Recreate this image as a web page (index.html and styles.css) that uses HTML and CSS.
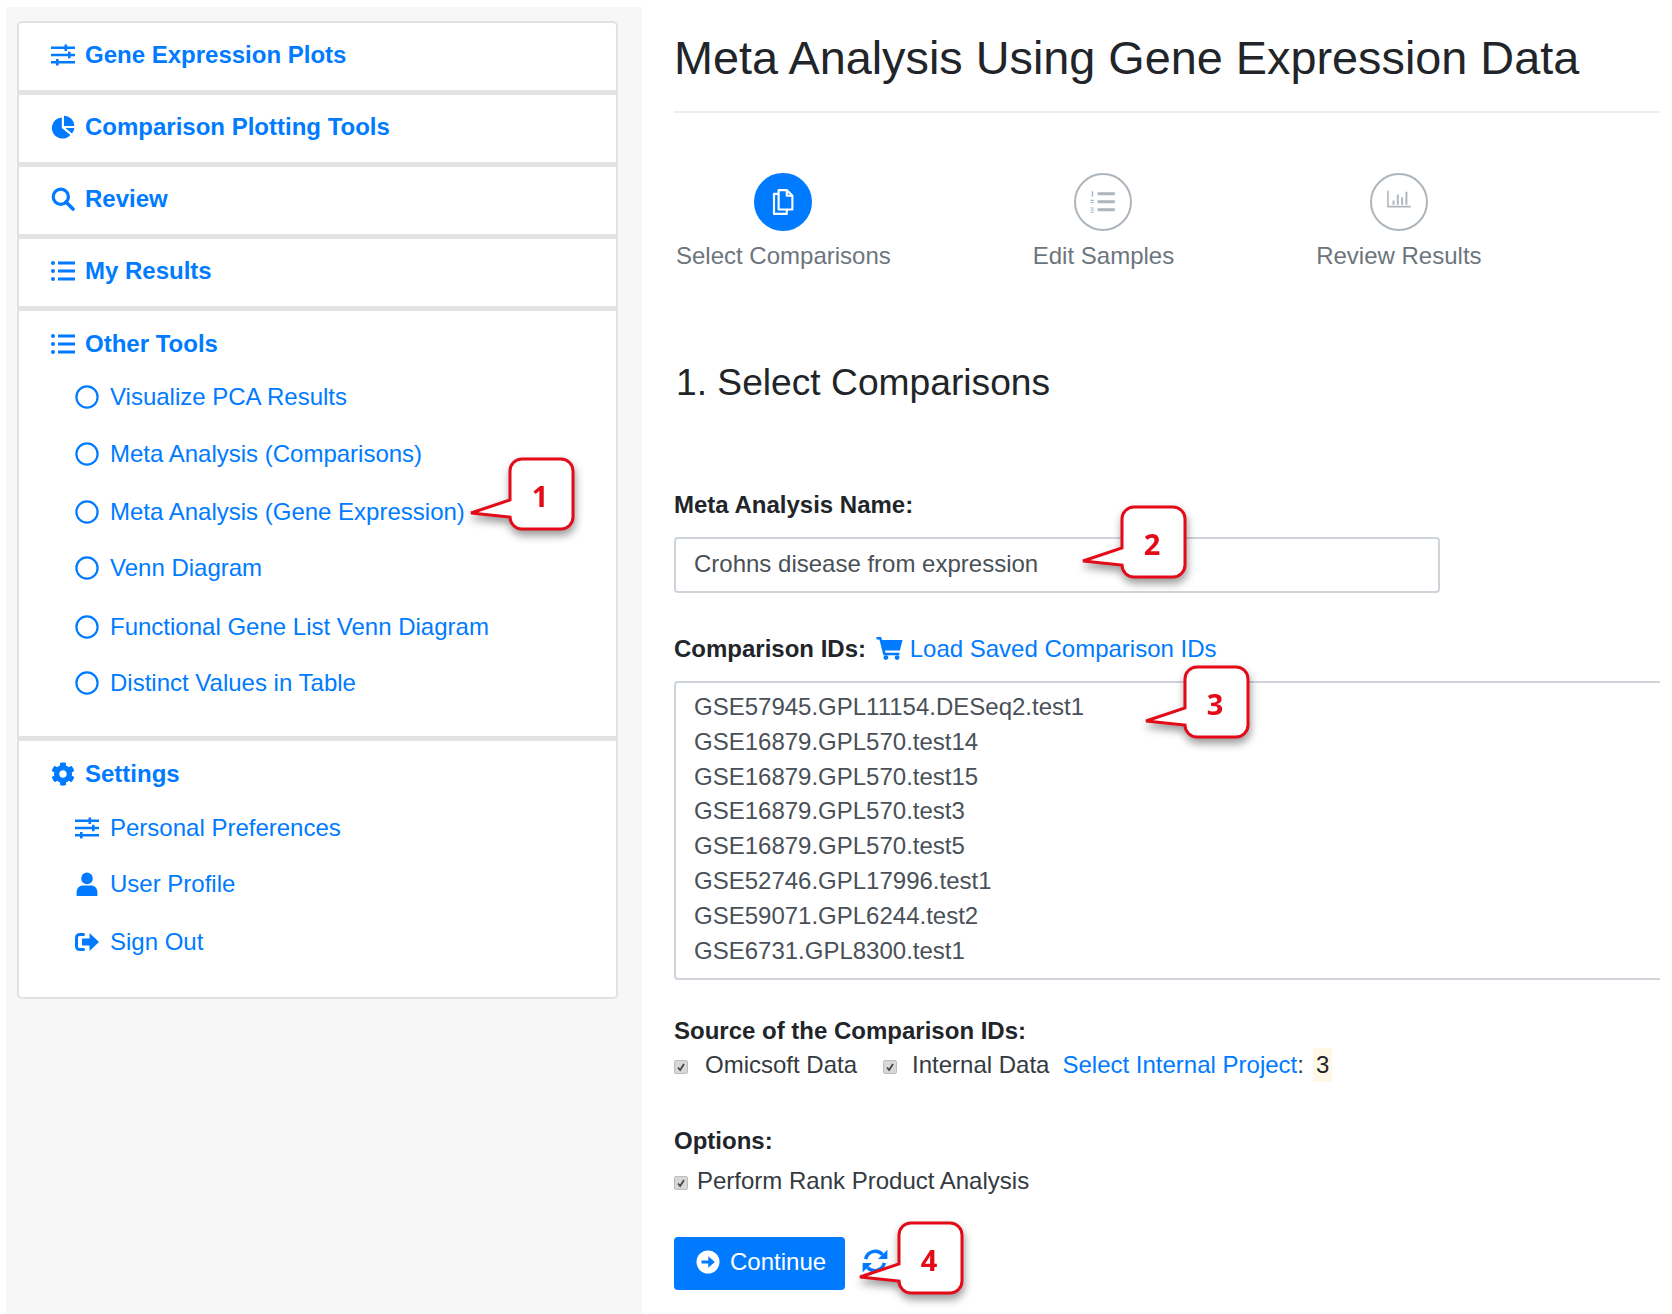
FILE: index.html
```html
<!DOCTYPE html>
<html>
<head>
    <title>Meta Analysis Using Gene Expression Data</title>
    <link rel="stylesheet" href="styles.css">
</head>
<body>
    <!-- shared icons -->
    <svg class="defs" width="0" height="0">
        <symbol id="i-sliders" viewBox="0 0 24 24">
            <path d="M0 3.5h24v2.6H0zM0 10.7h24v2.6H0zM0 17.9h24v2.6H0z"/>
            <path d="M13.5 1.5h2.6v6.6h-2.6zM17 8.7h2.6v6.6H17zM5 15.9h2.6v6.6H5z"/>
        </symbol>
        <symbol id="i-pie" viewBox="0 0 24 24">
            <path d="M10.8 2.4A10.6 10.6 0 1 0 19.4 20L10.8 13Z"/>
            <path d="M13 .8A10.4 10.4 0 0 1 23.4 11H13Z"/>
            <path d="M14.4 13h9A10.6 10.6 0 0 1 20.9 18.6Z"/>
        </symbol>
        <symbol id="i-search" viewBox="0 0 24 24">
            <circle cx="9.8" cy="9.8" r="7.6" fill="none" stroke="currentColor" stroke-width="3.2"/>
            <path d="M15 15l7 7" fill="none" stroke="currentColor" stroke-width="3.6" stroke-linecap="round"/>
        </symbol>
        <symbol id="i-list" viewBox="0 0 24 24">
            <circle cx="2" cy="4" r="2"/><circle cx="2" cy="12" r="2"/><circle cx="2" cy="20" r="2"/>
            <path d="M7 2.6h17v2.8H7zM7 10.6h17v2.8H7zM7 18.6h17v2.8H7z"/>
        </symbol>
        <symbol id="i-cog" viewBox="0 0 512 512">
            <path d="M487.4 315.7l-42.6-24.6c4.3-23.2 4.3-47 0-70.2l42.6-24.6c4.9-2.8 7.1-8.6 5.5-14-11.1-35.6-30-67.8-54.7-94.6-3.8-4.1-10-5.1-14.8-2.3L380.8 110c-17.9-15.4-38.5-27.3-60.8-35.1V25.8c0-5.6-3.9-10.5-9.4-11.7-36.7-8.2-74.3-7.8-109.2 0-5.5 1.2-9.4 6.1-9.4 11.7V75c-22.2 7.9-42.8 19.8-60.8 35.1L88.7 85.5c-4.9-2.8-11-1.9-14.8 2.3-24.7 26.7-43.6 58.9-54.7 94.6-1.7 5.4.6 11.2 5.5 14L67.3 221c-4.3 23.2-4.3 47 0 70.2l-42.6 24.6c-4.9 2.8-7.1 8.6-5.5 14 11.1 35.6 30 67.8 54.7 94.6 3.8 4.1 10 5.1 14.8 2.3l42.6-24.6c17.9 15.4 38.5 27.3 60.8 35.1v49.2c0 5.6 3.9 10.5 9.4 11.7 36.7 8.2 74.3 7.8 109.2 0 5.5-1.2 9.4-6.1 9.4-11.7v-49.2c22.2-7.9 42.8-19.8 60.8-35.1l42.6 24.6c4.9 2.8 11 1.9 14.8-2.3 24.7-26.7 43.6-58.9 54.7-94.6 1.5-5.5-.7-11.3-5.6-14.1zM256 336c-44.1 0-80-35.9-80-80s35.9-80 80-80 80 35.9 80 80-35.9 80-80 80z"/>
        </symbol>
        <symbol id="i-circle" viewBox="0 0 24 24">
            <circle cx="12" cy="12" r="10.6" fill="none" stroke="currentColor" stroke-width="2.2"/>
        </symbol>
        <symbol id="i-user" viewBox="0 0 24 24">
            <circle cx="12" cy="6.4" r="5.8"/>
            <path d="M1.6 23.4v-3.2c0-4 3-6.6 6.4-6.6h8c3.4 0 6.4 2.6 6.4 6.6v3.2c0 .4-.3.6-.6.6H2.2c-.3 0-.6-.2-.6-.6z"/>
        </symbol>
        <symbol id="i-signout" viewBox="0 0 24 24">
            <path d="M8.5 4.5H4.5a3 3 0 0 0-3 3v9a3 3 0 0 0 3 3h4" fill="none" stroke="currentColor" stroke-width="3" stroke-linecap="round"/>
            <path d="M7 8.6h7.5V3L24 12l-9.5 9v-5.6H7z"/>
        </symbol>
        <symbol id="i-cart" viewBox="0 0 26 24">
            <path d="M0 1h4.6l.9 3H26l-2.6 10.4H8.4l.5 2.4h14v2.4H6.9L2.9 3.4H0z"/>
            <circle cx="9.4" cy="21.6" r="2.4"/><circle cx="20.6" cy="21.6" r="2.4"/>
        </symbol>
        <symbol id="i-sync" viewBox="0 0 24 24">
            <path d="M3.4 10.2A9 9 0 0 1 19 6.2" fill="none" stroke="currentColor" stroke-width="3.2"/>
            <path d="M23.4 1.6v8.6h-8.6z"/>
            <path d="M20.6 13.8A9 9 0 0 1 5 17.8" fill="none" stroke="currentColor" stroke-width="3.2"/>
            <path d="M.6 22.4v-8.6h8.6z"/>
        </symbol>
        <symbol id="i-callout" viewBox="0 0 120 90">
            <path d="M45 18a12 12 0 0 1 12-12h39a12 12 0 0 1 12 12v46a12 12 0 0 1-12 12H57a12 12 0 0 1-12-12L6 60l39-13z"/>
        </symbol>
    </svg>

    <div class="page">
        <div class="sidebar">
            <div class="panel">
                <a class="row" href="#"><svg class="ico"><use href="#i-sliders"/></svg>Gene Expression Plots</a>
                <a class="row" href="#"><svg class="ico"><use href="#i-pie"/></svg>Comparison Plotting Tools</a>
                <a class="row" href="#"><svg class="ico"><use href="#i-search"/></svg>Review</a>
                <a class="row" href="#"><svg class="ico"><use href="#i-list"/></svg>My Results</a>

                <div class="group group-tools">
                    <a class="head" href="#"><svg class="ico"><use href="#i-list"/></svg>Other Tools</a>
                    <ul class="subnav">
                        <li><svg class="ico"><use href="#i-circle"/></svg>Visualize PCA Results</li>
                        <li><svg class="ico"><use href="#i-circle"/></svg>Meta Analysis (Comparisons)</li>
                        <li><svg class="ico"><use href="#i-circle"/></svg>Meta Analysis (Gene Expression)</li>
                        <li><svg class="ico"><use href="#i-circle"/></svg>Venn Diagram</li>
                        <li><svg class="ico"><use href="#i-circle"/></svg>Functional Gene List Venn Diagram</li>
                        <li><svg class="ico"><use href="#i-circle"/></svg>Distinct Values in Table</li>
                    </ul>
                </div>

                <div class="group group-settings">
                    <a class="head" href="#"><svg class="ico"><use href="#i-cog"/></svg>Settings</a>
                    <ul class="subnav">
                        <li><svg class="ico"><use href="#i-sliders"/></svg>Personal Preferences</li>
                        <li><svg class="ico"><use href="#i-user"/></svg>User Profile</li>
                        <li><svg class="ico"><use href="#i-signout"/></svg>Sign Out</li>
                    </ul>
                </div>
            </div>
        </div>

        <div class="main">
            <h1>Meta Analysis Using Gene Expression Data</h1>

            <div class="steps">
                <div class="step active">
                    <span class="dot">
                        <svg width="30" height="30" viewBox="0 0 24 24" fill="none" stroke="currentColor" stroke-width="1.7" stroke-linejoin="round">
                            <path d="M8.5 2.5h6.5l4.5 4.5v11H8.5z"/>
                            <path d="M15 2.5V7h4.5"/>
                            <path d="M8.5 5.5H4.8v16H15V18"/>
                        </svg>
                    </span>
                    Select Comparisons
                </div>
                <div class="step">
                    <span class="dot">
                        <svg width="28" height="28" viewBox="0 0 26 26" fill="currentColor">
                            <path d="M8 4h16v2.8H8zM8 11.4h16v2.8H8zM8 18.8h16v2.8H8z"/>
                            <path d="M2.5 3h1.4v5H2.5zM1.5 11h3v1h-3zM1.5 13h3v1h-3zM1.5 18h3v1h-3zM1.5 20h3v1h-3zM1.5 22h3v1h-3z"/>
                        </svg>
                    </span>
                    Edit Samples
                </div>
                <div class="step">
                    <span class="dot">
                        <svg width="28" height="28" viewBox="0 0 26 26" fill="currentColor">
                            <path d="M2 2.5h1.4v14H24V18H2z"/>
                            <path d="M7 11.5h1.8v4H7zM11 6h1.8v9.5H11zM15 8.5h1.8v7H15zM19 3.5h1.8v12H19z"/>
                        </svg>
                    </span>
                    Review Results
                </div>
            </div>

            <h2>1. Select Comparisons</h2>

            <form>
                <label class="field-label name-label" for="metaName">Meta Analysis Name:</label>
                <input class="box name-input" type="text" id="metaName" value="Crohns disease from expression">

                <div class="field-label ids-label">
                    Comparison IDs:
                    <a class="load-link" href="#"><svg class="cart"><use href="#i-cart"/></svg>Load Saved Comparison IDs</a>
                </div>
                <textarea class="box ids-input" rows="8">GSE57945.GPL11154.DESeq2.test1
GSE16879.GPL570.test14
GSE16879.GPL570.test15
GSE16879.GPL570.test3
GSE16879.GPL570.test5
GSE52746.GPL17996.test1
GSE59071.GPL6244.test2
GSE6731.GPL8300.test1</textarea>

                <div class="field-label source-label">Source of the Comparison IDs:</div>
                <div class="checks">
                    <span class="check"><svg viewBox="0 0 14 14"><path d="M3.5 7.5l2.5 3 4.5-7"/></svg></span>
                    <span class="opt-omic">Omicsoft Data</span>
                    <span class="check"><svg viewBox="0 0 14 14"><path d="M3.5 7.5l2.5 3 4.5-7"/></svg></span>
                    <span class="opt-internal">Internal Data</span>
                    <span><a href="#">Select Internal Project</a>:</span>
                    <span class="count">3</span>
                </div>

                <div class="field-label options-label">Options:</div>
                <div class="checks rank-row">
                    <span class="check"><svg viewBox="0 0 14 14"><path d="M3.5 7.5l2.5 3 4.5-7"/></svg></span>
                    <span class="opt-rank">Perform Rank Product Analysis</span>
                </div>

                <div class="actions">
                    <button class="btn" type="button">
                        <svg width="24" height="24" viewBox="0 0 24 24">
                            <circle cx="12" cy="12" r="11.5" fill="#fff"/>
                            <path d="M5.5 10.4h6.8V6.2L18.8 12l-6.5 5.8v-4.2H5.5z" fill="#007bff"/>
                        </svg>
                        Continue
                    </button>
                    <svg class="sync"><use href="#i-sync"/></svg>
                </div>
            </form>
        </div>

        <!-- red help callouts over the page -->
        <div class="callout c1"><svg><use href="#i-callout"/><text x="75" y="54">1</text></svg></div>
        <div class="callout c2"><svg><use href="#i-callout"/><text x="75" y="54">2</text></svg></div>
        <div class="callout c3"><svg><use href="#i-callout"/><text x="75" y="54">3</text></svg></div>
        <div class="callout c4"><svg><use href="#i-callout"/><text x="75" y="54">4</text></svg></div>
    </div>
</body>
</html>
```

FILE: styles.css
```css
html, body {
    margin: 0;
    padding: 0;
    background-color: #fff;
    overflow: hidden;
}
body {
    font-family: "Liberation Sans", Arial, sans-serif;
    font-size: 24px;
    color: #212529;
}
a {
    color: #007bff;
    text-decoration: none;
}
.defs {
    position: absolute;
}
.page {
    position: relative;
    display: flex;
    width: 1672px;
    height: 1314px;
    overflow: hidden;
}

/* sidebar */
.sidebar {
    box-sizing: border-box;
    width: 636px;
    height: 1307px;
    margin: 7px 0 0 6px;
    padding: 14px 0 0 11px;
    background-color: #f7f7f7;
}
.panel {
    box-sizing: border-box;
    width: 601px;
    height: 978px;
    background-color: #fff;
    border: 2px solid #e2e2e2;
    border-radius: 5px;
}
.row {
    display: flex;
    align-items: center;
    box-sizing: border-box;
    height: 72px;
    padding: 0 0 4px 32px;
    border-bottom: 5px solid #e2e2e2;
    font-weight: bold;
}
.ico {
    flex: none;
    width: 24px;
    height: 24px;
    margin-right: 10px;
    fill: currentColor;
    color: #007bff;
}
.group {
    padding-left: 32px;
}
.group-tools {
    height: 425px;
    box-sizing: border-box;
    padding-top: 19px;
}
.group-settings {
    height: 256px;
    box-sizing: border-box;
    padding-top: 19px;
    border-top: 5px solid #e2e2e2;
}
.head {
    display: flex;
    align-items: center;
    height: 28px;
    font-weight: bold;
}
.subnav {
    list-style: none;
    margin: 10px 0 0 0;
    padding: 0 0 0 24px;
    color: #007bff;
}
.group-settings .subnav {
    margin-top: 11px;
}
.subnav li {
    display: flex;
    align-items: center;
    height: 57px;
}
.subnav li .ico {
    width: 24px;
    height: 24px;
    margin-right: 11px;
}
.group-tools li:nth-child(3) { margin-top: 1px; }
.group-tools li:nth-child(4) { margin-top: -1px; }
.group-tools li:nth-child(5) { margin-top: 2px; }
.group-tools li:nth-child(6) { margin-top: -1px; }
.group-settings li:nth-child(2) { margin-top: -1px; }
.group-settings li:nth-child(3) { margin-top: 1px; }

/* main column */
.main {
    width: 986px;
    margin-left: 32px;
    overflow: hidden;
}
h1 {
    height: 60px;
    margin: 28px 0 0 0;
    padding-bottom: 23px;
    border-bottom: 2px solid #eee;
    font-size: 46.8px;
    font-weight: normal;
    line-height: 60px;
}
.steps {
    display: flex;
    gap: 142px;
    margin-top: 60px;
    padding-left: 2px;
    height: 97px;
}
.step {
    display: flex;
    flex-direction: column;
    align-items: center;
    color: #6c757d;
    line-height: 28px;
}
.dot {
    display: flex;
    align-items: center;
    justify-content: center;
    box-sizing: border-box;
    width: 58px;
    height: 58px;
    margin-bottom: 11px;
    border: 2px solid #adb5bd;
    border-radius: 50%;
    color: #adb5bd;
}
.active .dot {
    background-color: #007bff;
    border-color: #007bff;
    color: #fff;
}
h2 {
    height: 44px;
    margin: 90px 0 0 2px;
    font-size: 37.2px;
    font-weight: normal;
    line-height: 44px;
}
.field-label {
    display: block;
    height: 28px;
    font-weight: bold;
    line-height: 28px;
}
.name-label { margin-top: 87px; }
.ids-label { margin-top: 42px; }
.source-label { margin-top: 37px; }
.options-label { margin-top: 45px; }

.box {
    display: block;
    box-sizing: border-box;
    margin-top: 18px;
    border: 2px solid #ced4da;
    border-radius: 4px;
    background-color: #fff;
    color: #495057;
    font-family: "Liberation Sans", Arial, sans-serif;
    font-size: 24px;
    outline: none;
}
.name-input {
    width: 766px;
    height: 56px;
    padding: 0 18px 3px;
}
.ids-input {
    width: 1100px;
    height: 299px;
    padding: 7px 18px;
    line-height: 34.8px;
    overflow: hidden;
    resize: none;
}
.load-link {
    margin-left: 3px;
    font-weight: normal;
}
.cart {
    width: 27px;
    height: 24px;
    margin-right: 7px;
    vertical-align: -3px;
    fill: #007bff;
}

.checks {
    display: flex;
    align-items: center;
    height: 34px;
    margin-top: 3px;
    color: #343a40;
}
.check {
    display: block;
    flex: none;
    box-sizing: border-box;
    width: 14px;
    height: 14px;
    margin-top: 4px;
    background-color: #d8d8d8;
    border: 1px solid #bdbdbd;
    border-radius: 2px;
}
.check svg {
    display: block;
    width: 12px;
    height: 12px;
    fill: none;
    stroke: #444;
    stroke-width: 2;
}
.opt-omic { margin: 0 26px 0 17px; }
.opt-internal { margin: 0 13px 0 15px; }
.opt-rank { margin-left: 9px; }
.count {
    margin-left: 9px;
    padding: 0 3px;
    background-color: #fff8e6;
    color: #212529;
    line-height: 34px;
}
.rank-row {
    height: 28px;
    margin-top: 12px;
}

.actions {
    display: flex;
    align-items: center;
    margin-top: 42px;
}
.btn {
    display: flex;
    align-items: center;
    gap: 10px;
    box-sizing: border-box;
    width: 171px;
    height: 53px;
    padding: 0 0 4px 22px;
    background-color: #007bff;
    border: none;
    border-radius: 4px;
    color: #fff;
    font-family: "Liberation Sans", Arial, sans-serif;
    font-size: 24px;
}
.sync {
    width: 26px;
    height: 26px;
    margin: 0 0 6px 17px;
    fill: #007bff;
    color: #007bff;
}

/* callouts */
.callout {
    position: absolute;
    width: 120px;
    height: 90px;
}
.callout svg {
    display: block;
    width: 120px;
    height: 90px;
    overflow: visible;
    fill: #fff;
    stroke: #e30b17;
    stroke-width: 3;
    filter: drop-shadow(1px 5px 4px rgba(0, 0, 0, 0.4));
}
.callout text {
    fill: #e30b17;
    stroke: none;
    font-family: "Open Sans", sans-serif;
    font-size: 29px;
    font-weight: bold;
    text-anchor: middle;
}
.c1 { left: 465px; top: 453px; }
.c2 { left: 1077px; top: 501px; }
.c3 { left: 1140px; top: 661px; }
.c4 { left: 854px; top: 1217px; }
```
